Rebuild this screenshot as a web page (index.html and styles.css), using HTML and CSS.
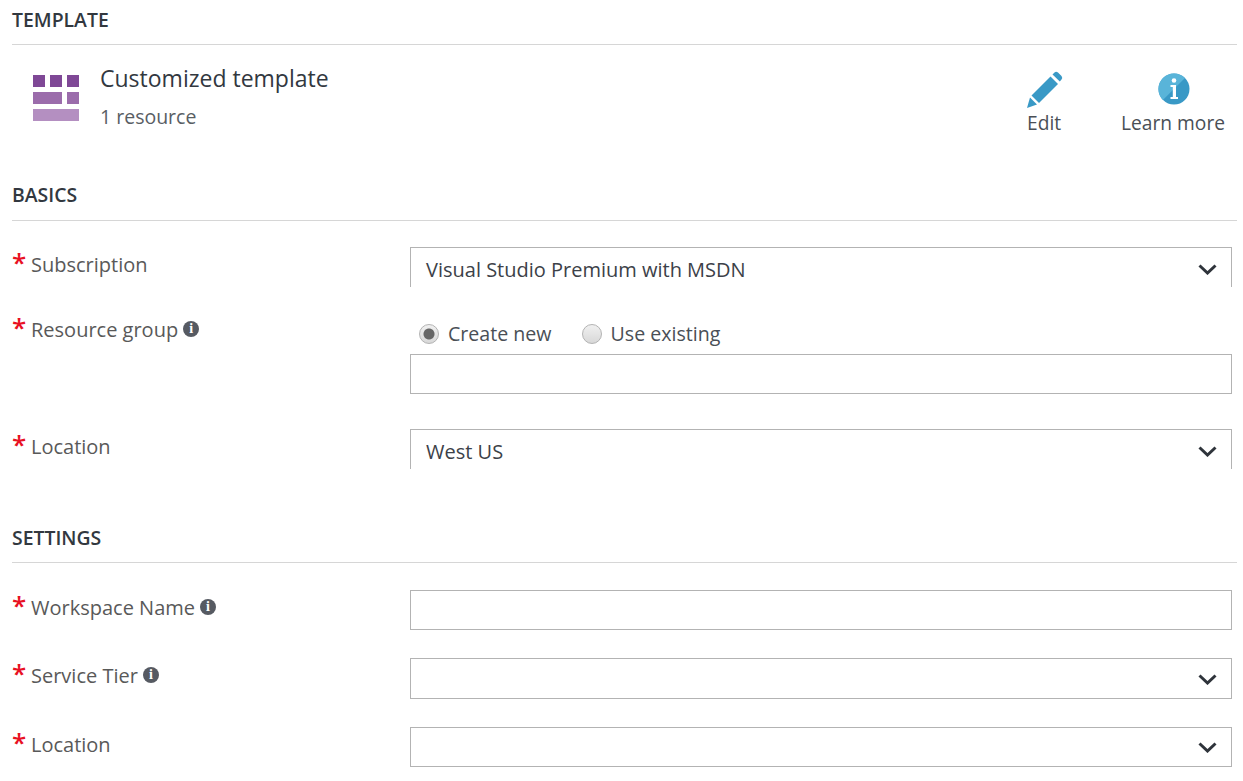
FILE: index.html
```html
<!DOCTYPE html>
<html lang="en">

<head>
    <meta charset="UTF-8">
    <meta name="viewport" content="width=device-width, initial-scale=1.0">
    <title>Customized template</title>
    <link rel="stylesheet" href="styles.css">
</head>

<body>
    <section class="section">
        <h2 class="section-title">TEMPLATE</h2>
        <div class="template">
            <svg class="template-icon" width="46" height="46" viewBox="0 0 46 46">
                <rect x="0" y="0" width="12" height="12" fill="#7f4896" />
                <rect x="17" y="0" width="12" height="12" fill="#7f4896" />
                <rect x="34" y="0" width="12" height="12" fill="#7f4896" />
                <rect x="0" y="17" width="29" height="12" fill="#9b6cab" />
                <rect x="34" y="17" width="12" height="12" fill="#9b6cab" />
                <rect x="0" y="34" width="46" height="12" fill="#b48fc1" />
            </svg>
            <div class="template-text">
                <div class="template-name">Customized template</div>
                <div class="template-count">1 resource</div>
            </div>
            <div class="actions">
                <div class="action">
                    <svg width="36" height="37" viewBox="0 0 36 37">
                        <path d="M0 37 L3 26.5 L10 33.5 Z" fill="#3999c6" />
                        <path d="M4.5 24.5 L23.5 5.5 L31 13 L12 32 Z" fill="#3999c6" />
                        <path d="M25.5 3.5 L27.5 1.5 Q29 0 31 1.5 L34.5 5 Q36 7 34.5 8.5 L32.8 10.5 Z" fill="#3999c6" />
                    </svg>
                    <span>Edit</span>
                </div>
                <div class="action">
                    <svg width="32" height="37" viewBox="0 0 32 37">
                        <circle cx="16" cy="18" r="15.5" fill="#3999c6" />
                        <path d="M5 7 A15.5 15.5 0 0 1 27 7 L4.9 28.9 A15.5 15.5 0 0 1 5 7 Z" fill="#59b4d9" />
                        <circle cx="16" cy="9.5" r="2.3" fill="#fff" />
                        <path d="M12.5 14 H18 V26 H20 V28 H12.5 V26 H14.8 V16 H12.5 Z" fill="#fff" />
                    </svg>
                    <span>Learn more</span>
                </div>
            </div>
        </div>
    </section>

    <section class="section">
        <h2 class="section-title section-title-basics">BASICS</h2>
        <div class="fields fields-basics">
            <div class="row">
                <label class="label"><span class="star">*</span>Subscription</label>
                <div class="select select-open">
                    <span>Visual Studio Premium with MSDN</span>
                    <svg class="chevron" width="19" height="11" viewBox="0 0 19 11"><path d="M1.5 1.5 L9.5 9 L17.5 1.5" /></svg>
                </div>
            </div>
            <div class="row row-radio">
                <label class="label"><span class="star">*</span>Resource group<span class="info">i</span></label>
                <div>
                    <div class="radios">
                        <label class="radio"><input type="radio" name="rg" checked>Create new</label>
                        <label class="radio"><input type="radio" name="rg">Use existing</label>
                    </div>
                    <input class="textbox" type="text">
                </div>
            </div>
            <div class="row">
                <label class="label"><span class="star">*</span>Location</label>
                <div class="select select-open">
                    <span>West US</span>
                    <svg class="chevron" width="19" height="11" viewBox="0 0 19 11"><path d="M1.5 1.5 L9.5 9 L17.5 1.5" /></svg>
                </div>
            </div>
        </div>
    </section>

    <section class="section">
        <h2 class="section-title">SETTINGS</h2>
        <div class="fields fields-settings">
            <div class="row">
                <label class="label"><span class="star">*</span>Workspace Name<span class="info">i</span></label>
                <input class="textbox" type="text">
            </div>
            <div class="row">
                <label class="label"><span class="star">*</span>Service Tier<span class="info">i</span></label>
                <div class="select select-tall">
                    <span></span>
                    <svg class="chevron chevron-closed" width="19" height="11" viewBox="0 0 19 11"><path d="M1.5 1.5 L9.5 9 L17.5 1.5" /></svg>
                </div>
            </div>
            <div class="row">
                <label class="label"><span class="star">*</span>Location</label>
                <div class="select">
                    <span></span>
                    <svg class="chevron chevron-closed" width="19" height="11" viewBox="0 0 19 11"><path d="M1.5 1.5 L9.5 9 L17.5 1.5" /></svg>
                </div>
            </div>
        </div>
    </section>
</body>

</html>
```

FILE: styles.css
```css
* {
    box-sizing: border-box;
}

body {
    margin: 0;
    padding: 0 6px 0 12px;
    font-family: "Open Sans", "Noto Sans", sans-serif;
    font-size: 20px;
    color: #3c4148;
    background-color: #fff;
}

.section-title {
    height: 45px;
    margin: 0;
    padding-top: 7px;
    font-size: 19.4px;
    line-height: 26px;
    font-weight: 600;
    color: #32383f;
    border-bottom: 1px solid #d6d6d6;
}

.section-title-basics {
    padding-top: 6px;
}

.template {
    display: flex;
    height: 131px;
    padding-left: 21px;
}

.template-icon {
    margin-top: 30px;
    flex: none;
}

.template-text {
    margin-left: 21px;
    padding-top: 16px;
}

.template-name {
    font-size: 23px;
    line-height: 34px;
    color: #32383f;
}

.template-count {
    margin-top: 5px;
    font-size: 19.5px;
    line-height: 34px;
    color: #595e64;
}

.actions {
    display: flex;
    gap: 58px;
    margin-left: auto;
    padding: 26px 12px 0 0;
}

.action {
    display: flex;
    flex-direction: column;
    align-items: center;
    gap: 2px;
    font-size: 19.2px;
    line-height: 26px;
    color: #4a4f56;
}

.action svg {
    margin-left: 2px;
}

.fields {
    display: flex;
    flex-direction: column;
}

.fields-basics {
    padding-top: 26px;
    padding-bottom: 49px;
    gap: 28px;
}

.fields-settings {
    padding-top: 27px;
    gap: 28px;
}

.row {
    display: grid;
    grid-template-columns: 398px 822px;
}

.row-radio {
    margin-bottom: 7px;
}

.row-radio .label {
    margin-top: -3px;
}

.label {
    display: flex;
    align-items: flex-start;
    height: 36px;
    font-size: 20px;
    line-height: 36px;
    color: #595959;
}

.star {
    width: 19px;
    font-size: 26px;
    font-weight: 600;
    line-height: 31px;
    color: #e81123;
}

.info {
    width: 16px;
    height: 16px;
    margin: 9px 0 0 5px;
    border-radius: 50%;
    background-color: #565a62;
    color: #fff;
    font-family: "Liberation Serif", serif;
    font-size: 14px;
    font-weight: 700;
    line-height: 16px;
    text-align: center;
}

.select,
.textbox {
    display: flex;
    align-items: center;
    justify-content: space-between;
    width: 822px;
    height: 40px;
    padding: 0 15px;
    border: 1px solid #b3b3b3;
    background-color: #fff;
    outline: none;
}

.select-open {
    border-bottom: none;
    padding-right: 14px;
    padding-top: 3px;
    font-size: 20px;
    color: #3c4148;
}

.select-tall {
    height: 41px;
}

.chevron {
    fill: none;
    stroke: #2f343b;
    stroke-width: 3;
}

.chevron-closed {
    margin-right: -1px;
    margin-top: 1px;
}

.radios {
    display: flex;
    gap: 30px;
    height: 39px;
    padding: 2px 0 0 9px;
}

.radio {
    display: flex;
    align-items: center;
    height: 32px;
    gap: 9px;
    font-size: 19.6px;
    color: #4a4f56;
}

.radio input {
    appearance: none;
    width: 20px;
    height: 20px;
    margin: 2px 0 0;
    border: 1px solid #b3b3b3;
    border-radius: 50%;
    background: linear-gradient(#f0f0f0, #d8d8d8);
}

.radio input:checked {
    background: radial-gradient(circle, #666 0, #666 5px, transparent 6px), linear-gradient(#f0f0f0, #d8d8d8);
}
```
